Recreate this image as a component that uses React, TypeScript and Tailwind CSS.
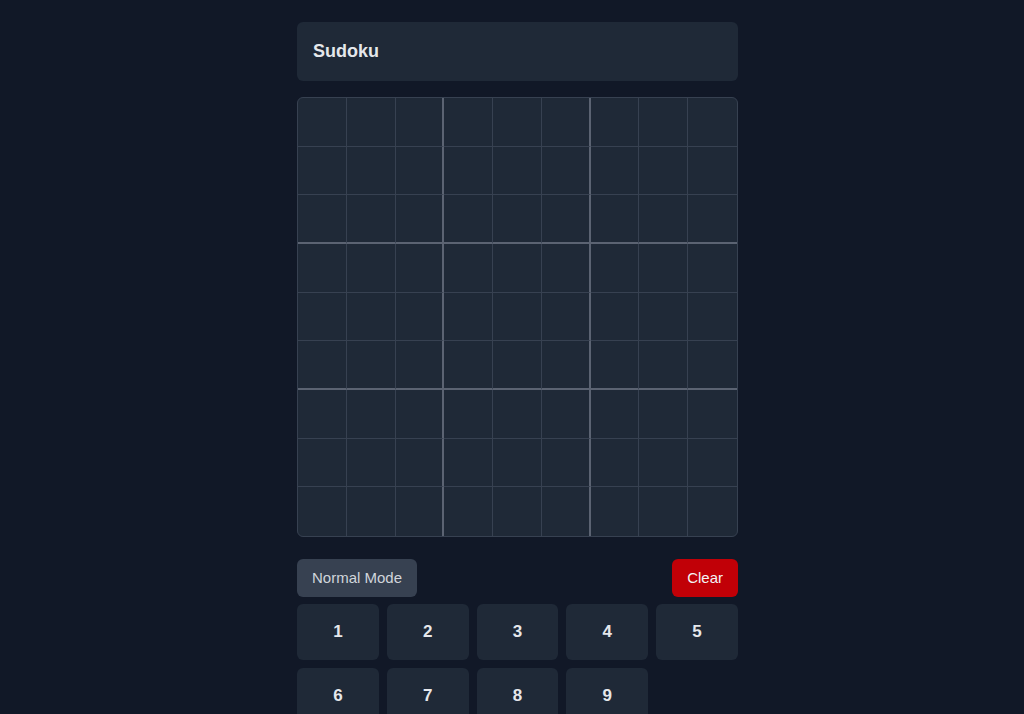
import React, { useState } from 'react';

const App: React.FC = () => {
    const [board, setBoard] = useState<(number | null)[]>(Array(81).fill(null));
    const [selected, setSelected] = useState<number | null>(null);
    const [mode, setMode] = useState<'Normal' | 'Notes'>('Normal');

    const setValue = (n: number) => {
        if (selected === null) return;
        const next = [...board];
        next[selected] = n;
        setBoard(next);
    };

    const clear = () => {
        if (selected === null) return;
        const next = [...board];
        next[selected] = null;
        setBoard(next);
    };

    return (
        <div className="min-h-screen bg-[#111827] pl-[11px] pt-[22px] pb-10" style={{ fontFamily: '"Liberation Sans", Arial, sans-serif' }}>
            <div className="w-[441px] mx-auto">
                <div className="h-[59px] bg-[#1f2937] rounded-md flex items-center px-4">
                    <h1 className="text-[18px] font-bold text-[#e5e7eb]">Sudoku</h1>
                </div>

                <div className="mt-4 h-[440px] grid grid-cols-9 grid-rows-9 bg-[#1f2937] border border-[#374151] rounded-md overflow-hidden">
                    {board.map((v, i) => {
                        const row = Math.floor(i / 9);
                        const col = i % 9;
                        const right = col === 8 ? '' : col % 3 === 2 ? 'border-r-2 border-r-[#5b6372]' : 'border-r border-r-[#374151]';
                        const bottom = row === 8 ? '' : row % 3 === 2 ? 'border-b-2 border-b-[#5b6372]' : 'border-b border-b-[#374151]';
                        return (
                            <div
                                key={i}
                                onClick={() => setSelected(i)}
                                className={`flex items-center justify-center text-lg font-bold text-[#e5e7eb] ${right} ${bottom} ${selected === i ? 'bg-[#374151]' : ''}`}
                            >
                                {v}
                            </div>
                        );
                    })}
                </div>

                <div className="mt-[22px] flex justify-between items-center">
                    <button
                        onClick={() => setMode(mode === 'Normal' ? 'Notes' : 'Normal')}
                        className="h-[38px] px-[15px] rounded-md bg-[#374151] text-[#d1d5db] text-[15px]"
                    >
                        {mode} Mode
                    </button>
                    <button onClick={clear} className="h-[38px] px-[15px] rounded-md bg-[#c10007] text-[#f3f4f6] text-[15px]">
                        Clear
                    </button>
                </div>

                <div className="mt-[7px] grid grid-cols-5 gap-2">
                    {[1, 2, 3, 4, 5, 6, 7, 8, 9].map(n => (
                        <button
                            key={n}
                            onClick={() => setValue(n)}
                            className="h-14 rounded-md bg-[#1f2937] text-[#e5e7eb] text-[17px] font-bold"
                        >
                            {n}
                        </button>
                    ))}
                </div>
            </div>
        </div>
    );
};

export default App;
